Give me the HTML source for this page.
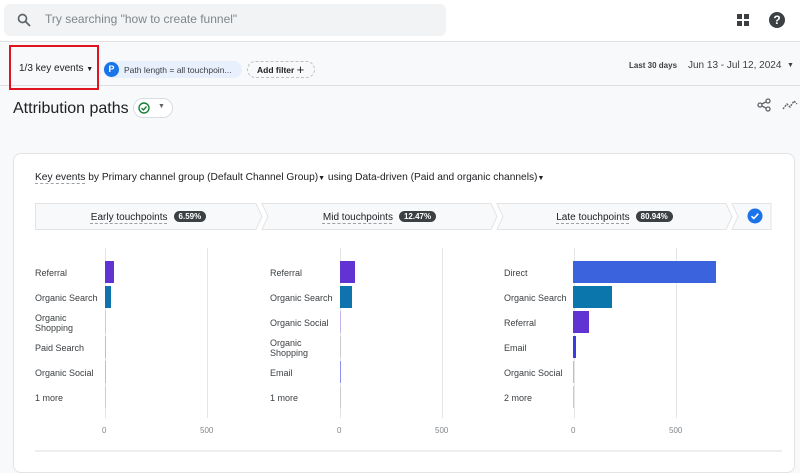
<!DOCTYPE html>
<html><head><style>
*{margin:0;padding:0;box-sizing:border-box}
body{width:800px;height:458px;overflow:hidden;background:#f8f9fa;font-family:"Liberation Sans",Arial,sans-serif;color:#202124;position:relative}
.a{position:absolute}
.lbl{position:absolute;font-size:9px;color:#3c4043;line-height:10px}
.ax{position:absolute;font-size:8px;color:#80868b}
.g{position:absolute;width:1px;background:#e3e5e8;top:248px;height:170px}
.pill{background:#3c4043;color:#fff;font-size:8px;font-weight:bold;border-radius:7px;padding:1px 5px;margin-left:6px;vertical-align:1px}
.tp{position:absolute;top:203px;height:27px;line-height:27px;font-size:10px;text-align:center;color:#202124}
.tp u{text-decoration:underline dashed #9aa0a6;text-underline-offset:3px}
</style></head><body>
<div class="a" style="left:0;top:0;width:800px;height:42px;background:#fff;border-bottom:1px solid #e0e0e0"></div>
<div class="a" style="left:4px;top:4px;width:442px;height:32px;background:#f1f3f4;border-radius:6px"></div>
<svg class="a" style="left:17px;top:13px" width="14" height="14" viewBox="0 0 14 14"><circle cx="5.5" cy="5.5" r="4" fill="none" stroke="#5f6368" stroke-width="1.7"/><path d="M8.5 8.5L13 13" stroke="#5f6368" stroke-width="1.8"/></svg>
<div class="a" style="left:45px;top:12px;font-size:12px;color:#80868b">Try searching "how to create funnel"</div>
<svg class="a" style="left:737px;top:14px" width="13" height="13"><rect x="0" y="0" width="5" height="5" fill="#3c4043"/><rect x="7" y="0" width="5" height="5" fill="#3c4043"/><rect x="0" y="7" width="5" height="5" fill="#3c4043"/><rect x="7" y="7" width="5" height="5" fill="#3c4043"/></svg>
<div class="a" style="left:769px;top:12px;width:16px;height:16px;border-radius:50%;background:#3c4043;color:#fff;font-size:12px;font-weight:bold;text-align:center;line-height:16px">?</div>
<div class="a" style="left:0;top:85px;width:800px;height:1px;background:#e0e0e0"></div>
<div class="a" style="left:9px;top:45px;width:90px;height:45px;border:2px solid #e0141e"></div>
<div class="a" style="left:19px;top:63px;font-size:10px">1/3 key events <span style="font-size:7px">▼</span></div>
<div class="a" style="left:103px;top:61px;width:139px;height:17px;background:#e8f0fe;border-radius:9px"></div>
<div class="a" style="left:104px;top:62px;width:15px;height:15px;border-radius:50%;background:#1a73e8;color:#fff;font-size:9px;font-weight:bold;text-align:center;line-height:15px">P</div>
<div class="a" style="left:124px;top:65px;font-size:8.5px;color:#3c4043">Path length = all touchpoin...</div>
<div class="a" style="left:247px;top:61px;width:68px;height:17px;border:1px dashed #bdc1c6;border-radius:9px;font-size:8.5px;font-weight:bold;line-height:15px;padding-left:9px">Add filter <span style="font-size:13px;font-weight:normal;vertical-align:-1px">+</span></div>
<div class="a" style="left:629px;top:61px;font-size:8px;font-weight:bold;color:#3c4043">Last 30 days</div>
<div class="a" style="left:688px;top:60px;font-size:10px;color:#3c4043">Jun 13 - Jul 12, 2024</div>
<div class="a" style="left:787px;top:62px;font-size:7px;color:#3c4043">▼</div>
<div class="a" style="left:13px;top:100px;font-size:16px;color:#202124">Attribution paths</div>
<div class="a" style="left:133px;top:98px;width:40px;height:20px;border:1px solid #dadce0;border-radius:10px;background:#fff"></div>
<svg class="a" style="left:138px;top:102px" width="12" height="12"><circle cx="6" cy="6" r="5" fill="none" stroke="#188038" stroke-width="1.4"/><path d="M3.5 6l2 2 3-3.5" fill="none" stroke="#188038" stroke-width="1.4"/></svg>
<div class="a" style="left:158px;top:103px;font-size:7px;color:#5f6368">▼</div>
<svg class="a" style="left:757px;top:98px" width="14" height="14"><circle cx="11" cy="3" r="2" fill="none" stroke="#5f6368" stroke-width="1.3"/><circle cx="3" cy="7" r="2" fill="none" stroke="#5f6368" stroke-width="1.3"/><circle cx="11" cy="11" r="2" fill="none" stroke="#5f6368" stroke-width="1.3"/><path d="M4.8 6l4.5-2.2M4.8 8l4.5 2.2" stroke="#5f6368" stroke-width="1.3"/></svg>
<svg class="a" style="left:782px;top:99px" width="16" height="12"><path d="M1 10l4-5 3 3 4-6 3 3" fill="none" stroke="#5f6368" stroke-width="1.4" stroke-dasharray="2 1"/></svg>
<div class="a" style="left:13px;top:153px;width:782px;height:320px;background:#fff;border:1px solid #e3e3e3;border-radius:8px"></div>
<div class="a" style="left:35px;top:172px;font-size:10.2px;color:#202124"><span style="text-decoration:underline dashed #9aa0a6;text-underline-offset:3px">Key events</span> by Primary channel group (Default Channel Group)<span style="font-size:7px">▼</span> using Data-driven (Paid and organic channels)<span style="font-size:7px">▼</span></div>
<svg class="a" style="left:34px;top:202px" width="740" height="30"><g fill="#f8f9fa" stroke="#e3e3e3" stroke-width="1"><polygon points="1.5,1.5 222,1.5 228,14.5 222,27.5 1.5,27.5"/><polygon points="228,1.5 457,1.5 463,14.5 457,27.5 228,27.5 234,14.5"/><polygon points="463,1.5 692,1.5 698,14.5 692,27.5 463,27.5 469,14.5"/><polygon points="698,1.5 737,1.5 737,27.5 698,27.5 704,14.5"/></g></svg>
<div class="tp" style="left:35px;width:227px"><u>Early touchpoints</u><span class="pill">6.59%</span></div>
<div class="tp" style="left:262px;width:235px"><u>Mid touchpoints</u><span class="pill">12.47%</span></div>
<div class="tp" style="left:497px;width:235px"><u>Late touchpoints</u><span class="pill">80.94%</span></div>
<svg class="a" style="left:747px;top:208px" width="16" height="16"><circle cx="8" cy="8" r="7.5" fill="#1a73e8"/><path d="M4.5 8.2l2.3 2.3 4.5-4.8" fill="none" stroke="#fff" stroke-width="1.6"/></svg>
<div class="g" style="left:105px"></div><div class="g" style="left:207px"></div>
<div class="g" style="left:340px"></div><div class="g" style="left:442px"></div>
<div class="g" style="left:574px"></div><div class="g" style="left:676px"></div>
<div class="lbl" style="left:35px;top:268px">Referral</div>
<div class="lbl" style="left:35px;top:293px">Organic Search</div>
<div class="lbl" style="left:35px;top:313px">Organic<br>Shopping</div>
<div class="lbl" style="left:35px;top:343px">Paid Search</div>
<div class="lbl" style="left:35px;top:368px">Organic Social</div>
<div class="lbl" style="left:35px;top:393px">1 more</div>
<div class="a" style="left:105px;top:261px;width:9px;height:22px;background:#6233d3"></div>
<div class="a" style="left:105px;top:286px;width:6px;height:22px;background:#0f74ad"></div>
<div class="a" style="left:105px;top:311px;width:1px;height:22px;background:#ccc"></div>
<div class="a" style="left:105px;top:336px;width:1px;height:22px;background:#a5c4f5"></div>
<div class="a" style="left:105px;top:361px;width:1px;height:22px;background:#c5b3ee"></div>
<div class="a" style="left:105px;top:386px;width:1px;height:22px;background:#ccc"></div>
<div class="lbl" style="left:270px;top:268px">Referral</div>
<div class="lbl" style="left:270px;top:293px">Organic Search</div>
<div class="lbl" style="left:270px;top:318px">Organic Social</div>
<div class="lbl" style="left:270px;top:338px">Organic<br>Shopping</div>
<div class="lbl" style="left:270px;top:368px">Email</div>
<div class="lbl" style="left:270px;top:393px">1 more</div>
<div class="a" style="left:340px;top:261px;width:15px;height:22px;background:#6233d3"></div>
<div class="a" style="left:340px;top:286px;width:12px;height:22px;background:#0f74ad"></div>
<div class="a" style="left:340px;top:311px;width:1px;height:22px;background:#c5b3ee"></div>
<div class="a" style="left:340px;top:336px;width:1px;height:22px;background:#ccc"></div>
<div class="a" style="left:340px;top:361px;width:1px;height:22px;background:#8f8ff0"></div>
<div class="a" style="left:340px;top:386px;width:1px;height:22px;background:#ccc"></div>
<div class="lbl" style="left:504px;top:268px">Direct</div>
<div class="lbl" style="left:504px;top:293px">Organic Search</div>
<div class="lbl" style="left:504px;top:318px">Referral</div>
<div class="lbl" style="left:504px;top:343px">Email</div>
<div class="lbl" style="left:504px;top:368px">Organic Social</div>
<div class="lbl" style="left:504px;top:393px">2 more</div>
<div class="a" style="left:573px;top:261px;width:143px;height:22px;background:#3b63de"></div>
<div class="a" style="left:573px;top:286px;width:39px;height:22px;background:#0b76ab"></div>
<div class="a" style="left:573px;top:311px;width:16px;height:22px;background:#6233d3"></div>
<div class="a" style="left:573px;top:336px;width:3px;height:22px;background:#3b3be0"></div>
<div class="a" style="left:573px;top:361px;width:1px;height:22px;background:#c5b3ee"></div>
<div class="a" style="left:573px;top:386px;width:1px;height:22px;background:#ccc"></div>
<div class="ax" style="left:102px;top:426px">0</div><div class="ax" style="left:200px;top:426px">500</div>
<div class="ax" style="left:337px;top:426px">0</div><div class="ax" style="left:435px;top:426px">500</div>
<div class="ax" style="left:571px;top:426px">0</div><div class="ax" style="left:669px;top:426px">500</div>
<div class="a" style="left:35px;top:450px;width:747px;height:2px;background:#eee"></div>
</body></html>
